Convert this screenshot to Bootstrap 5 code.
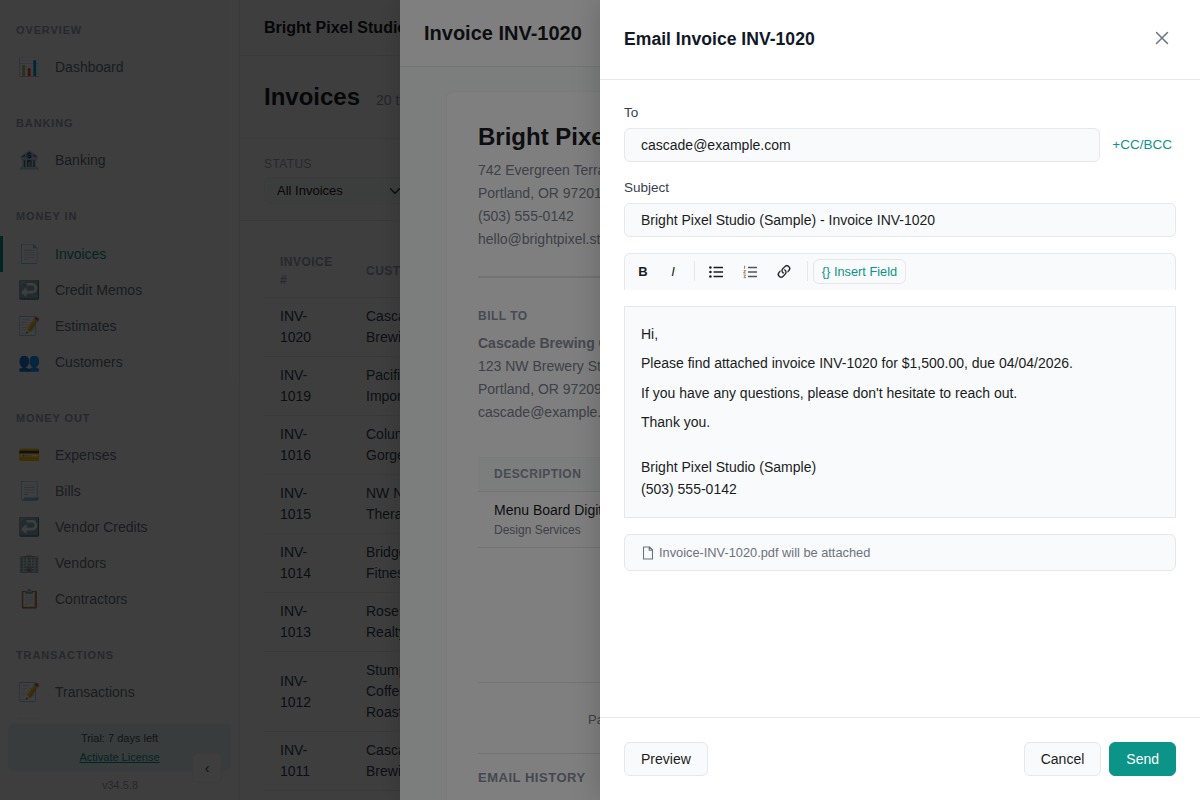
<!DOCTYPE html>
<html lang="en">
<head>
    <meta charset="UTF-8">
    <meta name="viewport" content="width=device-width, initial-scale=1.0">
    <title>Email Invoice</title>

    <!-- Bootstrap CSS -->
    <link href="https://cdn.jsdelivr.net/npm/bootstrap@5.3.0/dist/css/bootstrap.min.css" rel="stylesheet">
    <style>
        html, body { height: 800px; overflow: hidden; }
        body { font-family: "Liberation Sans", Arial, sans-serif; font-size: 14px; color: #1a1d23; background: #f9fafb; }

        /* app behind the panels */
        .app-shell { height: 800px; }
        .side-rail { width: 240px; height: 800px; flex: none; border-right: 1px solid #e5e7eb; position: relative; overflow: hidden; }
        .side-scroll { height: 719px; overflow: hidden; padding-top: 24px; }
        .side-title { font-size: 11px; line-height: 13px; font-weight: 700; letter-spacing: .88px; color: #9ca3af; padding: 0 16px; margin-bottom: 12px; }
        .side-group { margin-bottom: 32px; }
        .side-link { display: flex; align-items: center; height: 36px; padding-left: 18px; color: #6b7280; text-decoration: none; }
        .side-link.is-active { color: #0d9488; border-left: 3px solid #0d9488; padding-left: 15px; margin-top: 13px; }
        .side-ico { width: 37px; font-size: 18px; line-height: 1; flex: none; }
        .rail-thumb { position: absolute; top: 0; right: 1px; width: 8px; height: 377px; background: #fff; border-radius: 0 0 4px 4px; }
        .trial-box { position: absolute; left: 8px; top: 723px; width: 223px; height: 48px; background: #e3f3f1; border-radius: 6px; text-align: center; font-size: 11px; line-height: 19px; padding-top: 6px; color: #4b5563; }
        .trial-box a { color: #0d9488; }
        .rail-version { position: absolute; left: 0; width: 240px; top: 777px; text-align: center; font-size: 11px; color: #9ca3af; }
        .rail-toggle { position: absolute; left: 192px; top: 753px; width: 30px; height: 30px; padding: 0; background: #f9fafb; border: 1px solid #eceef1; border-radius: 6px; color: #374151; font-size: 14px; line-height: 26px; }

        .main-col { flex: 1; min-width: 0; }
        .top-strip { height: 56px; padding: 0 24px; border-bottom: 1px solid #e5e7eb; font-size: 16px; font-weight: 700; line-height: 55px; }
        .page-head { height: 83px; padding: 0 24px; border-bottom: 1px solid #e5e7eb; }
        .page-head h1 { font-size: 24px; font-weight: 700; margin: 0; line-height: 82px; }
        .page-count { margin-left: 16px; line-height: 88px; color: #8b92a0; }
        .filter-bar { height: 82px; padding: 18px 24px 0; border-bottom: 1px solid #e5e7eb; }
        .filter-label { font-size: 12px; line-height: 14px; color: #9ca3af; letter-spacing: .4px; margin-bottom: 6px; }
        .filter-select { width: 152px; height: 27px; font-size: 13px; padding: 0 12px; line-height: 25px; background-color: #f3f4f6; border-color: #eceef1; color: #1a1d23; }
        .list-wrap { padding: 24px 24px 0; }
        .inv-table { margin: 0; width: 640px; table-layout: fixed; --bs-table-bg: transparent; --bs-table-color: #374151; }
        .inv-table th { font-size: 12px; letter-spacing: .48px; line-height: 18px; color: #9ca3af; padding: 8px 16px; vertical-align: middle; border-color: #e5e7eb; }
        .inv-table td { padding: 8px 16px; line-height: 21px; vertical-align: middle; border-color: #e5e7eb; }
        .inv-no { width: 86px; }
        .inv-table .inv-no-cell { color: #2f3d52; }

        /* panels: invoice view, then email */
        .stage-backdrop { position: fixed; inset: 0; background: #000; opacity: .5; }
        .panel-view { position: fixed; top: 0; right: 0; bottom: 0; background: #fff; box-shadow: -4px 0 24px rgba(0,0,0,.15); overflow: hidden; }
        .panel-invoice { width: 800px; }
        .panel-email { width: 600px; }
        .inv-head { height: 67px; padding: 0 24px; border-bottom: 1px solid #e5e7eb; background: #fff; }
        .inv-head h2 { font-size: 20px; font-weight: 700; margin: 0; line-height: 66px; }
        .inv-body { padding: 24px 46px; background: #f9fafb; }
        .paper { background: #fff; border: 1px solid #f3f4f6; border-radius: 8px; padding: 30px 31px; height: 900px; }
        .paper h3 { font-size: 24px; font-weight: 700; line-height: 29px; margin-bottom: 8px; }
        .paper-lines { line-height: 23px; color: #7b8290; white-space: nowrap; }
        .paper-rule { height: 2px; background: #e5e7eb; margin: 25px 0 31px; }
        .paper-label { font-size: 12px; font-weight: 700; letter-spacing: .48px; color: #8f97a8; line-height: 14px; margin-bottom: 9px; }
        .paper-lines strong { color: #8a90a0; }
        .desc-head { margin-top: 33px; height: 35px; padding: 0 16px; background: #f9fafb; border-bottom: 1px solid #e5e7eb; border-top: 1px solid #f3f4f6; font-size: 12px; font-weight: 700; letter-spacing: .48px; line-height: 33px; color: #8f97a8; }
        .desc-row { height: 56px; padding: 8px 16px; border-bottom: 1px solid #e5e7eb; white-space: nowrap; }
        .desc-row div { line-height: 21px; }
        .desc-row .desc-sub { font-size: 12px; line-height: 18px; color: #7b8290; }
        .totals-gap { height: 135px; border-bottom: 1px solid #e5e7eb; }
        .pay-note { height: 71px; border-bottom: 1px solid #e5e7eb; padding: 27px 0 0 110px; font-size: 13px; color: #7b8290; white-space: nowrap; }
        .hist-label { margin-top: 14px; font-size: 13px; font-weight: 700; letter-spacing: .52px; color: #8a90a0; }

        .mail-head { height: 80px; padding: 0 24px; border-bottom: 1px solid #e5e7eb; }
        .mail-head h2 { font-size: 17.6px; font-weight: 700; margin: 0; color: #111827; }
        .mail-close { width: 28px; height: 28px; padding: 0; background: none; border: 0; margin-top: -5px; margin-right: 0; color: #6b7280; }
        .mail-body { height: 637px; padding: 24px; }
        .mail-label { display: block; font-size: 13.5px; line-height: 18px; color: #374151; margin-bottom: 6px; }
        .mail-input { height: 34px; padding: 0 16px; font-size: 14px; background: #f9fafb; border-color: #e5e7eb; border-radius: 6px; color: #1a1d23; }
        .to-row { margin-bottom: 17px; }
        .cc-link { font-size: 13.5px; color: #0d9488; text-decoration: none; margin-left: 12px; margin-right: 4px; white-space: nowrap; }
        .edit-tools { height: 37px; padding: 5px 5px 0; margin-top: 16px; background: #f9fafb; border: 1px solid #e5e7eb; border-bottom: 0; border-radius: 6px 6px 0 0; gap: 4px; }
        .tool-btn { width: 26px; height: 25px; padding: 0; border: 0; background: none; font-size: 13px; color: #1a1d23; display: flex; align-items: center; justify-content: center; }
        .tool-wide { width: 30px; }
        .tool-sep { width: 1px; height: 20px; background: #e5e7eb; margin: 2px 2px 0 4px; }
        .field-btn { height: 25px; width: 93px; margin-left: -1px; padding: 0; border: 1px solid #e5e7eb; border-radius: 6px; background: transparent; color: #0d9488; font-size: 12.8px; line-height: 23px; }
        .mail-editor { margin-top: 16px; height: 212px; padding: 16px; background: #f9fafb; border: 1px solid #e5e7eb; line-height: 22.4px; color: #1a1d23; }
        .mail-editor p { margin: 0 0 7px; }
        .mail-editor .mail-sign { margin: 22px 0 0; }
        .attach-row { margin-top: 16px; height: 37px; padding: 0 16px; gap: 4px; background: #f9fafb; border: 1px solid #e5e7eb; border-radius: 6px; font-size: 12.8px; color: #6b7280; }
        .mail-foot { height: 83px; padding: 24px 24px 0; border-top: 1px solid #e5e7eb; }
        .mail-btn { height: 34px; padding: 0 16px; font-size: 14px; line-height: 32px; background: #f9fafb; border: 1px solid #e5e7eb; border-radius: 6px; color: #1a1d23; }
        .mail-send { background: #0d9488; border-color: #0d9488; color: #fff; }
    </style>
</head>
<body>
    <div class="app-shell d-flex">
        <aside class="side-rail">
            <div class="side-scroll">
                <div class="side-group">
                    <div class="side-title">OVERVIEW</div>
                    <a class="side-link" href="#"><span class="side-ico">📊</span>Dashboard</a>
                </div>
                <div class="side-group">
                    <div class="side-title">BANKING</div>
                    <a class="side-link" href="#"><span class="side-ico">🏦</span>Banking</a>
                </div>
                <div class="side-group">
                    <div class="side-title">MONEY IN</div>
                    <a class="side-link is-active" href="#"><span class="side-ico">📄</span>Invoices</a>
                    <a class="side-link" href="#"><span class="side-ico">↩️</span>Credit Memos</a>
                    <a class="side-link" href="#"><span class="side-ico">📝</span>Estimates</a>
                    <a class="side-link" href="#"><span class="side-ico">👥</span>Customers</a>
                </div>
                <div class="side-group">
                    <div class="side-title">MONEY OUT</div>
                    <a class="side-link" href="#"><span class="side-ico">💳</span>Expenses</a>
                    <a class="side-link" href="#"><span class="side-ico">📃</span>Bills</a>
                    <a class="side-link" href="#"><span class="side-ico">↩️</span>Vendor Credits</a>
                    <a class="side-link" href="#"><span class="side-ico">🏢</span>Vendors</a>
                    <a class="side-link" href="#"><span class="side-ico">📋</span>Contractors</a>
                </div>
                <div class="side-group">
                    <div class="side-title">TRANSACTIONS</div>
                    <a class="side-link" href="#"><span class="side-ico">📝</span>Transactions</a>
                    <a class="side-link" href="#"><span class="side-ico">📊</span></a>
                </div>
            </div>
            <div class="rail-thumb"></div>
            <div class="trial-box">Trial: 7 days left<br><a href="#">Activate License</a></div>
            <div class="rail-version">v34.5.8</div>
            <button class="rail-toggle" type="button">‹</button>
        </aside>

        <main class="main-col">
            <div class="top-strip text-nowrap">Bright Pixel Studio (Sample)</div>
            <div class="page-head d-flex align-items-start">
                <h1>Invoices</h1>
                <span class="page-count">20 total</span>
            </div>
            <div class="filter-bar">
                <div class="filter-label">STATUS</div>
                <select class="form-select filter-select"><option>All Invoices</option></select>
            </div>
            <div class="list-wrap">
                <table class="table inv-table">
                    <thead>
                        <tr><th class="inv-no">INVOICE #</th><th>CUSTOMER</th></tr>
                    </thead>
                    <tbody>
                        <tr><td class="inv-no-cell">INV-1020</td><td>Cascade<br>Brewing Co.</td></tr>
                        <tr><td class="inv-no-cell">INV-1019</td><td>Pacific<br>Imports</td></tr>
                        <tr><td class="inv-no-cell">INV-1016</td><td>Columbia<br>Gorge</td></tr>
                        <tr><td class="inv-no-cell">INV-1015</td><td>NW Nature<br>Therapy</td></tr>
                        <tr><td class="inv-no-cell">INV-1014</td><td>Bridgetown<br>Fitness</td></tr>
                        <tr><td class="inv-no-cell">INV-1013</td><td>Rose City<br>Realty</td></tr>
                        <tr><td class="inv-no-cell">INV-1012</td><td>Stumptown<br>Coffee<br>Roasters</td></tr>
                        <tr><td class="inv-no-cell">INV-1011</td><td>Cascade<br>Brewing Co.</td></tr>
                    </tbody>
                </table>
            </div>
        </main>
    </div>

    <div class="stage-backdrop"></div>

    <section class="panel-view panel-invoice">
        <div class="inv-head"><h2>Invoice INV-1020</h2></div>
        <div class="inv-body">
            <div class="paper">
                <h3 class="text-nowrap">Bright Pixel Studio (Sample)</h3>
                <div class="paper-lines">742 Evergreen Terrace<br>Portland, OR 97201<br>(503) 555-0142<br>hello@brightpixel.studio</div>
                <div class="paper-rule"></div>
                <div class="paper-label">BILL TO</div>
                <div class="paper-lines"><strong>Cascade Brewing Co.</strong><br>123 NW Brewery St<br>Portland, OR 97209<br>cascade@example.com</div>
                <div class="desc-head">DESCRIPTION</div>
                <div class="desc-row">
                    <div>Menu Board Digital Design</div>
                    <div class="desc-sub">Design Services</div>
                </div>
                <div class="totals-gap"></div>
                <div class="pay-note">Payment terms</div>
                <div class="hist-label">EMAIL HISTORY</div>
            </div>
        </div>
    </section>

    <div class="stage-backdrop"></div>

    <section class="panel-view panel-email d-flex flex-column">
        <div class="mail-head d-flex align-items-center justify-content-between">
            <h2>Email Invoice INV-1020</h2>
            <button class="mail-close" type="button" aria-label="Close">
                <svg width="14" height="14" viewBox="0 0 14 14" fill="none" stroke="currentColor" stroke-width="1.5" stroke-linecap="round"><path d="M1.5 1.5l11 11M12.5 1.5l-11 11"/></svg>
            </button>
        </div>
        <div class="mail-body">
            <label class="mail-label">To</label>
            <div class="d-flex align-items-center to-row">
                <input class="form-control mail-input" type="text" value="cascade@example.com">
                <a class="cc-link" href="#">+CC/BCC</a>
            </div>
            <label class="mail-label">Subject</label>
            <input class="form-control mail-input" type="text" value="Bright Pixel Studio (Sample) - Invoice INV-1020">

            <div class="edit-tools d-flex align-items-start">
                <button class="tool-btn fw-bold" type="button">B</button>
                <button class="tool-btn fst-italic" type="button">I</button>
                <span class="tool-sep"></span>
                <button class="tool-btn tool-wide" type="button">
                    <svg width="14" height="14" viewBox="0 0 14 14" fill="#1a1d23"><circle cx="1.4" cy="2.5" r="1.3"/><circle cx="1.4" cy="7" r="1.3"/><circle cx="1.4" cy="11.5" r="1.3"/><path d="M4.5 2.5H14M4.5 7H14M4.5 11.5H14" stroke="#1a1d23" stroke-width="1.4"/></svg>
                </button>
                <button class="tool-btn tool-wide" type="button">
                    <svg width="14" height="14" viewBox="0 0 14 14" fill="none" stroke="#4b5563"><path d="M5 2.5H14M5 7H14M5 11.5H14" stroke-width="1.4"/><path d="M1.6 .8v3M.6 5.6h2l-2 2.4h2.2M.6 10h2l-1 1.3 1 1.4H.6" stroke="#8a5a2b" stroke-width=".8"/></svg>
                </button>
                <button class="tool-btn tool-wide" type="button">
                    <svg width="18" height="18" viewBox="0 0 16 16" fill="#1a1d23" stroke="#1a1d23" stroke-width=".2"><path d="M4.715 6.542 3.343 7.914a3 3 0 1 0 4.243 4.243l1.828-1.829A3 3 0 0 0 8.586 5.5L8 6.086a1.002 1.002 0 0 0-.154.199 2 2 0 0 1 .861 3.337L6.88 11.45a2 2 0 1 1-2.83-2.83l.793-.792a4.018 4.018 0 0 1-.128-1.287z"/><path d="M6.586 4.672A3 3 0 0 0 7.414 9.5l.775-.776a2 2 0 0 1-.896-3.346L9.12 3.55a2 2 0 1 1 2.83 2.83l-.793.792c.112.42.155.855.128 1.287l1.372-1.372a3 3 0 1 0-4.243-4.243L6.586 4.672z"/></svg>
                </button>
                <span class="tool-sep"></span>
                <button class="field-btn" type="button">{} Insert Field</button>
            </div>

            <div class="mail-editor">
                <p>Hi,</p>
                <p>Please find attached invoice INV-1020 for $1,500.00, due 04/04/2026.</p>
                <p>If you have any questions, please don't hesitate to reach out.</p>
                <p>Thank you.</p>
                <p class="mail-sign">Bright Pixel Studio (Sample)<br>(503) 555-0142</p>
            </div>

            <div class="attach-row d-flex align-items-center">
                <svg width="14" height="14" viewBox="0 0 14 14" fill="none" stroke="currentColor" stroke-width="1.1" stroke-linejoin="round"><path d="M2.5 1h6l3 3v9h-9zM8.2 1v3.2h3.3"/></svg>
                <span>Invoice-INV-1020.pdf will be attached</span>
            </div>
        </div>
        <div class="mail-foot d-flex justify-content-between">
            <button class="mail-btn" type="button">Preview</button>
            <div class="d-flex gap-2">
                <button class="mail-btn" type="button">Cancel</button>
                <button class="mail-btn mail-send" type="button">Send</button>
            </div>
        </div>
    </section>

    <!-- Bootstrap JS -->
    <script src="https://cdn.jsdelivr.net/npm/bootstrap@5.3.0/dist/js/bootstrap.bundle.min.js"></script>
</body>
</html>
